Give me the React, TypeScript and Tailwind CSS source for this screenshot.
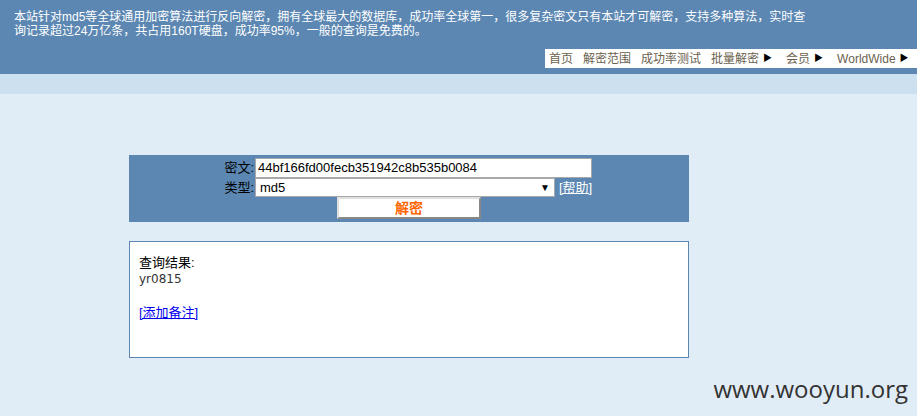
export default function App() {
  const nav = [
    { t: '首页', arrow: false },
    { t: '解密范围', arrow: false },
    { t: '成功率测试', arrow: false },
    { t: '批量解密', arrow: true },
    { t: '会员', arrow: true },
    { t: 'WorldWide', arrow: true },
  ];

  return (
    <div
      className="min-h-[416px] w-full bg-[#e1edf6] text-[12px]"
      style={{ fontFamily: '"Liberation Sans", Arial, "Noto Sans CJK SC", sans-serif' }}
    >
      {/* Header */}
      <div className="h-[74px] bg-[#5b87b2] relative">
        <p className="pl-[14px] pr-[100px] pt-[10px] text-white leading-[14px] text-[12px]">
          本站针对md5等全球通用加密算法进行反向解密，拥有全球最大的数据库，成功率全球第一，很多复杂密文只有本站才可解密，支持多种算法，实时查询记录超过24万亿条，共占用160T硬盘，成功率95%，一般的查询是免费的。
        </p>
        <div className="absolute right-0 top-[49px] h-[19px] w-[372px] bg-white flex items-center pl-[4px] text-[12px] text-[#6b6250] whitespace-nowrap">
          {nav.map((n) => (
            <span key={n.t} className="flex items-center mr-[10px] last:mr-0">
              {n.t}
              {n.arrow && <span className="ml-[4px] mr-[4px] text-[9px] text-black">▶</span>}
            </span>
          ))}
        </div>
      </div>
      <div className="h-[20px] bg-[#cce0ef]" />

      {/* Form */}
      <div className="ml-[129px] mt-[61px] w-[560px] h-[67px] bg-[#5b87b2] pt-[3px]">
        <div className="flex items-center h-[20px]">
          <span className="w-[126px] text-right text-[13px] text-black pr-[1px]">密文:</span>
          <div className="w-[337px] h-[20px] bg-white border border-[#a8a8a8] flex items-center px-[2px] text-[13px] text-black">
            44bf166fd00fecb351942c8b535b0084
          </div>
        </div>
        <div className="flex items-center h-[19px]">
          <span className="w-[126px] text-right text-[13px] text-black pr-[1px]">类型:</span>
          <div className="w-[300px] h-[19px] bg-white border border-[#a8a8a8] flex items-center justify-between px-[4px] text-[13px] text-black">
            <span>md5</span>
            <span className="text-[10px]">▼</span>
          </div>
          <a className="ml-[4px] text-[13px] text-white underline">[帮助]</a>
        </div>
        <div className="pl-[208px]">
          <div className="w-[144px] h-[22px] bg-white border-t-2 border-l-2 border-t-[#e0e0e0] border-l-[#e0e0e0] border-b-2 border-r-2 border-b-[#888] border-r-[#888] flex items-center justify-center text-[14px] font-bold text-[#ff6600]">
            解密
          </div>
        </div>
      </div>

      {/* Result */}
      <div className="ml-[129px] mt-[19px] w-[560px] h-[117px] bg-white border border-[#5b87b2] pl-[9px] pt-[12px] text-[13px] text-black">
        <div className="leading-[17px]">查询结果:</div>
        <div className="leading-[17px] text-[#333]" style={{ fontFamily: '"DejaVu Sans", Verdana, sans-serif', fontSize: '12px' }}>
          yr0815
        </div>
        <div className="mt-[15px]">
          <a className="text-[#0000ee] underline">[添加备注]</a>
        </div>
      </div>

      {/* Watermark */}
      <div className="flex justify-end pr-[9px] mt-[13px]">
        <span className="text-[24px] text-[#333]" style={{ fontFamily: '"Open Sans", sans-serif' }}>
          www.wooyun.org
        </span>
      </div>
    </div>
  );
}
